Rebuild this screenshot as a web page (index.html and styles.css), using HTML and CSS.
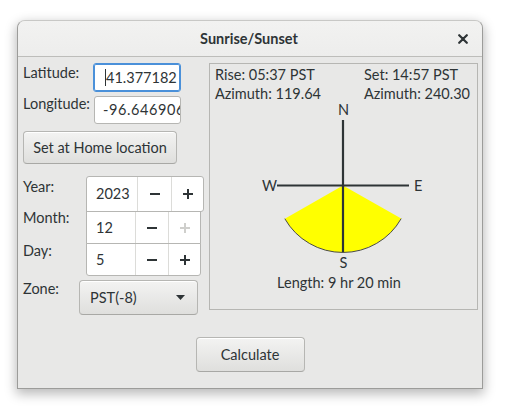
FILE: index.html
```html
<!DOCTYPE html>
<html>
<head>
<meta charset="utf-8">
<link rel="stylesheet" href="styles.css">
</head>
<body>
<div class="window">
  <header class="titlebar">
    <span></span>
    <span class="title">Sunrise/Sunset</span>
    <span class="close-wrap">
      <svg class="close" width="10" height="10" viewBox="0 0 10 10"><path d="M1.2 1.2L8.8 8.8M8.8 1.2L1.2 8.8" stroke="#2e3436" stroke-width="2.2" stroke-linecap="round"/></svg>
    </span>
  </header>
  <div class="content">
    <div class="main">
      <div class="left">
        <div class="row row-lat">
          <span class="label">Latitude:</span>
          <div class="entry focused"><span class="caret"></span><span>41.377182</span></div>
        </div>
        <div class="row row-lon">
          <span class="label">Longitude:</span>
          <div class="entry lon"><span>-96.646906</span></div>
        </div>
        <button class="btn home">Set at Home location</button>
        <div class="dates">
          <div class="date-labels">
            <span class="label l-year">Year:</span>
            <span class="label l-month">Month:</span>
            <span class="label l-day">Day:</span>
          </div>
          <div class="spins">
            <div class="spin year">
              <span class="val">2023</span>
              <span class="sb dec"><svg width="10" height="10" viewBox="0 0 10 10"><rect x="0" y="4" width="10" height="2" fill="#2e3436"/></svg></span>
              <span class="sb inc"><svg width="10" height="10" viewBox="0 0 10 10"><rect x="0" y="4" width="10" height="2" fill="#2e3436"/><rect x="4" y="0" width="2" height="10" fill="#2e3436"/></svg></span>
            </div>
            <div class="spin month">
              <span class="val">12</span>
              <span class="sb dec"><svg width="10" height="10" viewBox="0 0 10 10"><rect x="0" y="4" width="10" height="2" fill="#2e3436"/></svg></span>
              <span class="sb inc"><svg width="10" height="10" viewBox="0 0 10 10"><rect x="0" y="4" width="10" height="2" fill="#cfcfcc"/><rect x="4" y="0" width="2" height="10" fill="#cfcfcc"/></svg></span>
            </div>
            <div class="spin day">
              <span class="val">5</span>
              <span class="sb dec"><svg width="10" height="10" viewBox="0 0 10 10"><rect x="0" y="4" width="10" height="2" fill="#2e3436"/></svg></span>
              <span class="sb inc"><svg width="10" height="10" viewBox="0 0 10 10"><rect x="0" y="4" width="10" height="2" fill="#2e3436"/><rect x="4" y="0" width="2" height="10" fill="#2e3436"/></svg></span>
            </div>
          </div>
        </div>
        <div class="row row-zone">
          <span class="label l-zone">Zone:</span>
          <button class="btn combo"><span>PST(-8)</span><svg width="9" height="5" viewBox="0 0 9 5"><path d="M0 0H9L4.5 5Z" fill="#2e3436"/></svg></button>
        </div>
      </div>
      <div class="frame">
        <div class="info"><span class="c1">Rise: 05:37 PST</span><span>Set: 14:57 PST</span></div>
        <div class="info"><span class="c1">Azimuth: 119.64</span><span>Azimuth: 240.30</span></div>
        <svg class="compass" width="267" height="210" viewBox="0 0 267 210">
          <path d="M133 92.5L191.2 125.6A67 67 0 0 1 74.8 125.7Z" fill="#ffff00"/>
          <path d="M191.2 125.6A67 67 0 0 1 74.8 125.7" fill="none" stroke="#4a4a48" stroke-width="1"/>
          <line x1="133" y1="27" x2="133" y2="159" stroke="#2e3436" stroke-width="2.2"/>
          <line x1="67" y1="92.5" x2="199" y2="92.5" stroke="#2e3436" stroke-width="2.2"/>
          <text x="133.5" y="22" text-anchor="middle">N</text>
          <text x="67" y="98" text-anchor="end">W</text>
          <text x="204" y="98">E</text>
          <text x="133.5" y="175" text-anchor="middle">S</text>
          <text x="129" y="195" text-anchor="middle">Length: 9 hr 20 min</text>
        </svg>
      </div>
    </div>
    <div class="actions">
      <button class="btn calc">Calculate</button>
    </div>
  </div>
</div>
</body>
</html>
```

FILE: styles.css
```css
* { box-sizing: border-box; }
html, body { margin: 0; padding: 0; background: #ffffff; }
body {
  font-family: "Lato", "Noto Sans", sans-serif;
  font-size: 14.5px;
  color: #2e3436;
  width: 507px;
  height: 415px;
  overflow: hidden;
}
.window {
  margin: 20px 0 0 17px;
  width: 466px;
  height: 369px;
  border: 1px solid #9c9c9a;
  border-top-color: #c8c8c6;
  border-radius: 8px 8px 0 0;
  background: #e8e8e7;
  box-shadow: 0 4px 12px 1px rgba(0,0,0,0.28);
  overflow: hidden;
}
.titlebar {
  height: 36px;
  display: grid;
  grid-template-columns: 1fr auto 1fr;
  align-items: center;
  background: linear-gradient(#f2f2f1, #ededec);
  border-bottom: 1px solid #bdbdba;
}
.title {
  font-weight: bold;
  font-size: 14.5px;
  line-height: 18px;
  padding-right: 2px;
}
.close-wrap { display: flex; justify-content: flex-end; padding-right: 14px; padding-top: 1px; }
.close { display: block; }
.content { padding: 6px 4px 0 5px; }
.main { display: flex; gap: 6px; height: 247px; align-items: flex-start; }
.left { width: 180px; display: flex; flex-direction: column; align-items: flex-start; }
.label { display: block; line-height: 18px; white-space: nowrap; }
.row { display: flex; align-items: flex-start; }
.row-lat .label { width: 70px; margin-top: 1px; }
.row-lon { margin-top: 4px; }
.row-lon .label { width: 71px; margin-top: -1px; }
.entry {
  width: 88px;
  height: 29px;
  background: #ffffff;
  border: 1px solid #b6b6b3;
  border-radius: 3px;
  display: flex;
  align-items: center;
  overflow: hidden;
  white-space: nowrap;
  padding-left: 9px;
  line-height: 18px;
}
.entry.lon { width: 87px; height: 28px; padding-left: 8px; letter-spacing: 0.6px; }
.entry.focused {
  border-color: #4a90d9;
  box-shadow: inset 0 0 0 1px #4a90d9;
  padding-left: 11px;
}
.caret {
  display: inline-block;
  width: 1px;
  height: 17px;
  background: #2e3436;
}
.btn {
  font-family: inherit;
  font-size: 14.5px;
  color: #2e3436;
  background: linear-gradient(#f3f3f2, #dfdfdd);
  border: 1px solid #b6b6b3;
  border-bottom-color: #a8a8a5;
  border-radius: 4px;
  padding: 0;
  margin: 0;
  box-shadow: inset 0 1px #ffffff;
  line-height: 18px;
}
.home { margin-top: 7px; width: 154px; height: 33px; }
.dates { display: flex; margin-top: 12px; }
.date-labels { width: 63px; display: flex; flex-direction: column; }
.l-year { margin-top: 2px; }
.l-month { margin-top: 13px; }
.l-day { margin-top: 15px; }
.spins { display: flex; flex-direction: column; }
.spin {
  display: flex;
  background: #ffffff;
  border: 1px solid #b6b6b3;
  align-items: stretch;
}
.spin.year { width: 118px; height: 36px; border-radius: 3px 3px 3px 0; }
.spin.month { width: 115px; height: 33px; margin-top: -1px; }
.spin.day { width: 115px; height: 33px; margin-top: -1px; border-radius: 0 0 3px 3px; }
.val { display: flex; align-items: center; padding-left: 9px; width: 50px; line-height: 18px; }
.month .val, .day .val { width: 48px; }
.sb { display: flex; align-items: center; justify-content: center; border-left: 1px solid #dcdcd9; }
.year .dec { width: 34px; }
.month .dec, .day .dec { width: 33px; }
.sb.inc { flex: 1; }
.sb svg { display: block; }
.row-zone { margin-top: 4px; }
.l-zone { width: 56px; margin-top: 0; }
.combo {
  width: 119px;
  height: 35px;
  display: flex;
  align-items: center;
  justify-content: space-between;
  padding: 0 12px 0 10px;
}
.frame {
  width: 269px;
  height: 247px;
  border: 1px solid #b6b6b3;
  padding: 1px 0 0 5px;
  overflow: hidden;
}
.info { display: flex; line-height: 19px; white-space: nowrap; }
.info .c1 { width: 149px; }
.compass { display: block; margin-left: -5px; margin-top: -10px; font-family: "Lato", "Noto Sans", sans-serif; font-size: 14.5px; }
.compass text { fill: #2e3436; }
.actions { display: flex; justify-content: center; margin-top: 27px; padding-right: 1px; }
.calc { width: 109px; height: 35px; }
```
